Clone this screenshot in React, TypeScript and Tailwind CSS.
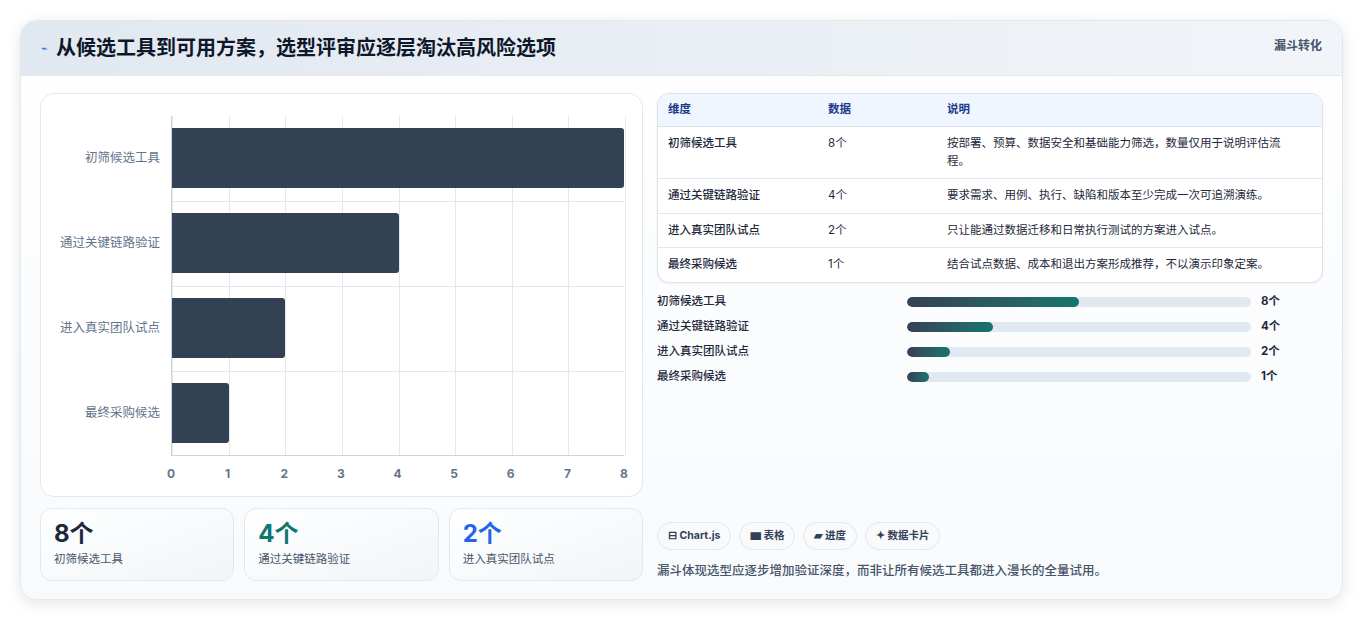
import React from "react";

const rows = [
  { n: "初筛候选工具", v: 8, d: "按部署、预算、数据安全和基础能力筛选，数量仅用于说明评估流程。" },
  { n: "通过关键链路验证", v: 4, d: "要求需求、用例、执行、缺陷和版本至少完成一次可追溯演练。" },
  { n: "进入真实团队试点", v: 2, d: "只让能通过数据迁移和日常执行测试的方案进入试点。" },
  { n: "最终采购候选", v: 1, d: "结合试点数据、成本和退出方案形成推荐，不以演示印象定案。" },
];

function Chart() {
  const W = 453;
  return (
    <div className="h-[404px] rounded-[14px] border border-[#e2e8f0] bg-white pt-[22px] pl-[8px] pr-[18px]">
      <div className="flex">
        <div className="w-[122px] flex flex-col h-[340px]">
          {rows.map((r) => (
            <div key={r.n} className="flex-1 flex items-center justify-end pr-[11px] text-[12.5px] text-[#64748b]">{r.n}</div>
          ))}
        </div>
        <div className="relative w-[453px] h-[340px] border-b border-l border-[#cbd5e1]">
          {Array.from({ length: 9 }).map((_, i) => (
            <div key={i} className="absolute top-0 bottom-0 w-px bg-[#e5e7eb]" style={{ left: (W / 8) * i }} />
          ))}
          {[1, 2, 3].map((i) => (
            <div key={i} className="absolute left-0 right-0 h-px bg-[#e5e7eb]" style={{ top: 85 * i }} />
          ))}
          <div className="absolute inset-0 flex flex-col">
            {rows.map((r) => (
              <div key={r.n} className="flex-1 flex items-center">
                <div className="h-[60px] bg-[#334155] rounded-r-[3px]" style={{ width: (W / 8) * r.v }} />
              </div>
            ))}
          </div>
        </div>
      </div>
      <div className="relative ml-[122px] h-[30px] text-[12px] font-bold text-[#64748b]">
        {Array.from({ length: 9 }).map((_, i) => (
          <span key={i} className="absolute top-[9px] -translate-x-1/2" style={{ left: (W / 8) * i }}>{i}</span>
        ))}
      </div>
    </div>
  );
}

export default function App() {
  return (
    <div className="w-[1363px] h-[621px] bg-white p-[20px] pb-0" style={{ fontFamily: "Inter, 'Noto Sans CJK SC', sans-serif" }}>
      <div className="h-[580px] rounded-[16px] border border-[#e2e8f0] shadow-[0_4px_16px_rgba(15,23,42,0.1)] bg-gradient-to-b from-white to-[#f8fafc] overflow-hidden">
        <div className="h-[55px] flex items-center justify-between px-[20px] bg-gradient-to-r from-[#e2e8f0] to-[#f1f5f9] border-b border-[#e2e8f0]">
          <div className="flex items-center gap-[8px]">
            <span className="text-[#2563eb] text-[11px]">⌁</span>
            <span className="text-[20px] font-bold text-[#0f172a]">从候选工具到可用方案，选型评审应逐层淘汰高风险选项</span>
          </div>
          <span className="self-start mt-[16px] text-[12px] font-bold text-[#475569]">漏斗转化</span>
        </div>
        <div className="flex gap-[14px] px-[19px] pt-[17px]">
          <div className="w-[603px] flex flex-col gap-[11px]">
            <Chart />
            <div className="flex gap-[10px]">
              {[
                ["8个", "初筛候选工具", "#1e293b"],
                ["4个", "通过关键链路验证", "#0f766e"],
                ["2个", "进入真实团队试点", "#2563eb"],
              ].map(([v, l, c]) => (
                <div key={l} className="flex-1 h-[73px] rounded-[12px] border border-[#e2e8f0] bg-gradient-to-br from-white to-[#f1f5f9] px-[13px] pt-[10px]">
                  <div className="text-[24px] leading-[30px] font-bold" style={{ color: c }}>{v}</div>
                  <div className="text-[11.5px] text-[#475569] mt-[2px]">{l}</div>
                </div>
              ))}
            </div>
          </div>
          <div className="flex-1 flex flex-col h-[487px]">
            <div className="rounded-[12px] border border-[#dbe3ee] overflow-hidden bg-white shadow-[0_1px_3px_rgba(15,23,42,0.06)]">
              <div className="flex h-[33px] items-center bg-[#eff6ff] border-b border-[#dbe3ee] text-[11.5px] font-bold text-[#1e3a8a]">
                <div className="w-[170px] pl-[10px]">维度</div>
                <div className="w-[119px]">数据</div>
                <div className="flex-1">说明</div>
              </div>
              {rows.map((r, i) => (
                <div key={r.n} className={`flex text-[11.5px] text-[#1e293b] py-[8px] leading-[17.5px] ${i < 3 ? "border-b border-[#e2e8f0]" : ""}`}>
                  <div className="w-[170px] pl-[10px] font-medium">{r.n}</div>
                  <div className="w-[119px]">{r.v}个</div>
                  <div className="flex-1 pr-[26px]">{r.d}</div>
                </div>
              ))}
            </div>
            <div className="flex flex-col gap-[10px] mt-[12px]">
              {rows.map((r) => (
                <div key={r.n} className="flex items-center h-[15px] text-[11.5px] font-medium text-[#1e293b]">
                  <div className="w-[250px]">{r.n}</div>
                  <div className="w-[344px] h-[10px] rounded-full bg-[#e2e8f0] overflow-hidden">
                    <div className="h-full rounded-full bg-gradient-to-r from-[#334155] to-[#0f766e]" style={{ width: `${(r.v / 16) * 100}%` }} />
                  </div>
                  <div className="ml-[10px] font-bold">{r.v}个</div>
                </div>
              ))}
            </div>
            <div className="mt-auto flex gap-[8px]">
              {["⊟ Chart.js", "▆ 表格", "▰ 进度", "✦ 数据卡片"].map((t) => (
                <span key={t} className="h-[28px] px-[10px] flex items-center rounded-full border border-[#e2e8f0] bg-[#f8fafc] text-[10.5px] font-bold text-[#334155]">{t}</span>
              ))}
            </div>
            <div className="text-[12.5px] text-[#475569] font-medium mt-[12px] leading-[18px]">漏斗体现选型应逐步增加验证深度，而非让所有候选工具都进入漫长的全量试用。</div>
          </div>
        </div>
      </div>
    </div>
  );
}
